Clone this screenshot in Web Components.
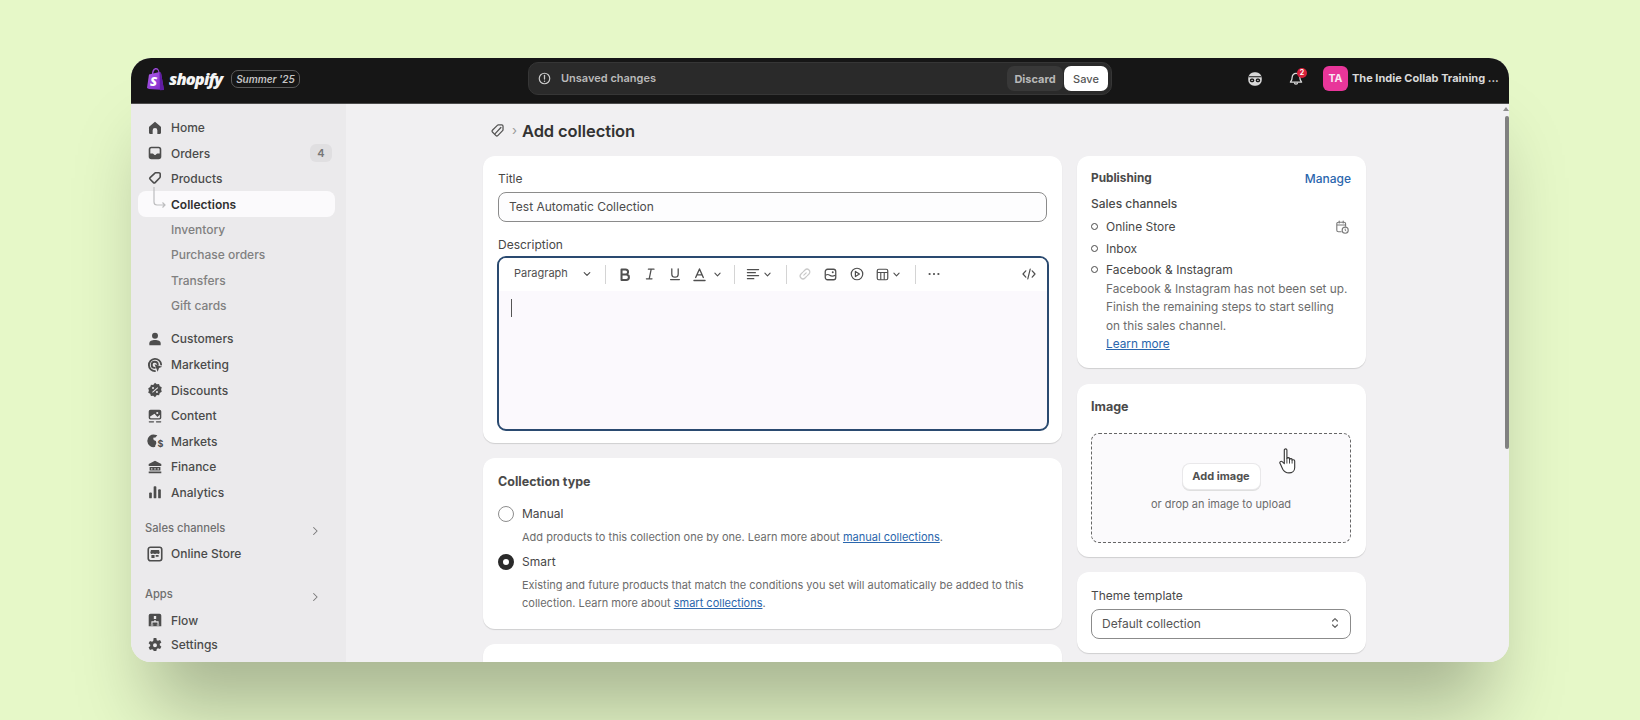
<!DOCTYPE html>
<html>
<head>
<meta charset="utf-8">
<title>Add collection</title>
<style>
    html, body { margin: 0; height: 100%; }
    body {
        background: #e6f8c8;
        font-family: Inter, "Noto Sans", sans-serif;
        overflow: hidden;
    }
    a { color: #2a66ad; text-decoration: underline; }
    .sec { margin-top: 8px; }
    .g { height: 25.6px; }
</style>
</head>
<body>
<app-window>
    <top-bar slot="top"></top-bar>
    <side-nav slot="side">
        <nav-item icon="home">Home</nav-item>
        <nav-item icon="orders" badge="4">Orders</nav-item>
        <nav-item icon="tag">Products</nav-item>
        <nav-item active>Collections</nav-item>
        <nav-item sub>Inventory</nav-item>
        <nav-item sub>Purchase orders</nav-item>
        <nav-item sub>Transfers</nav-item>
        <nav-item sub>Gift cards</nav-item>
        <nav-item class="sec g" icon="person">Customers</nav-item>
        <nav-item class="g" icon="target">Marketing</nav-item>
        <nav-item class="g" icon="discount">Discounts</nav-item>
        <nav-item class="g" icon="content">Content</nav-item>
        <nav-item class="g" icon="globe">Markets</nav-item>
        <nav-item class="g" icon="bank">Finance</nav-item>
        <nav-item class="g" icon="chart">Analytics</nav-item>
        <nav-heading style="margin-top:10px">Sales channels</nav-heading>
        <nav-item icon="store" style="margin-top:1px">Online Store</nav-item>
        <nav-heading style="margin-top:15px">Apps</nav-heading>
        <nav-item icon="flow" style="margin-top:1px">Flow</nav-item>
        <nav-item icon="gear" style="margin-top:-1px">Settings</nav-item>
    </side-nav>
    <collection-page slot="main">
        <form-card slot="left" style="padding-bottom:12px">
            <text-field label="Title" value="Test Automatic Collection"></text-field>
            <rich-editor label="Description"></rich-editor>
        </form-card>
        <form-card slot="left" style="padding:15px 15px 17px">
            <card-title>Collection type</card-title>
            <radio-option label="Manual" style="margin-top:15px">Add products to this collection one by one. Learn more about <a href="#">manual collections</a>.</radio-option>
            <radio-option label="Smart" checked style="margin-top:7px">Existing and future products that match the conditions you set will automatically be added to this<br>collection. Learn more about <a href="#">smart collections</a>.</radio-option>
        </form-card>
        <form-card slot="left" style="height:120px"></form-card>

        <form-card slot="right" style="padding:14px 15px 10px 14px">
            <publishing-panel>
                <channel-row label="Online Store" schedule></channel-row>
                <channel-row label="Inbox"></channel-row>
                <channel-row label="Facebook &amp; Instagram">Facebook &amp; Instagram has not been set up.<br>Finish the remaining steps to start selling<br>on this sales channel.<br><a href="#">Learn more</a></channel-row>
            </publishing-panel>
        </form-card>
        <form-card slot="right" style="padding-left:14px">
            <card-title>Image</card-title>
            <image-drop></image-drop>
        </form-card>
        <form-card slot="right" style="padding:15px 15px 14px 14px">
            <select-field label="Theme template" value="Default collection"></select-field>
        </form-card>
    </collection-page>
</app-window>

<script>
// Polaris-like icons, drawn on a 20 unit box.
const icons = {
    home: '<path fill="currentColor" d="M10 3 16.2 8.2c.3.3.5.6.5 1V15a1.8 1.8 0 0 1-1.8 1.8H12.6V12.6a2.6 2.6 0 0 0-5.2 0v4.2H5.100A1.800 1.800 0 0 1 3.300 15V9.200c0-.4.2-.7.5-1z"/>',
    orders: '<path fill="currentColor" fill-rule="evenodd" d="M6 3h8a3 3 0 0 1 3 3v8a3 3 0 0 1-3 3H6a3 3 0 0 1-3-3V6a3 3 0 0 1 3-3zm0 1.800A1.200 1.200 0 0 0 4.800 6v4.500h2.600c.5 0 .8.3 1 .7.3.7.9 1 1.600 1s1.300-.3 1.600-1c.2-.4.5-.7 1-.7h2.600V6A1.200 1.200 0 0 0 14 4.800z"/>',
    tag: '<path transform="translate(1.500 1.500) scale(.85)" fill="none" stroke="currentColor" stroke-width="2.100" stroke-linejoin="round" d="M11.500 3.200h3.700a1.600 1.600 0 0 1 1.600 1.600v3.700c0 .5-.2.9-.5 1.200l-6.200 6.300a1.500 1.500 0 0 1-2.100 0l-4.400-4.400a1.500 1.500 0 0 1 0-2.100l6.300-5.800c.2-.3.4-.5.6-.5z"/>',
    crumb: '<path fill="none" stroke="currentColor" stroke-width="1.500" stroke-linejoin="round" d="M11 3.500h4a1.500 1.500 0 0 1 1.500 1.500v4c0 .5-.2.9-.5 1.200l-5.700 5.800a1.500 1.500 0 0 1-2.100 0l-4.200-4.200a1.500 1.500 0 0 1 0-2.100l5.800-5.700c.3-.3.7-.5 1.200-.5z"/><path fill="none" stroke="currentColor" stroke-width="1.500" stroke-linecap="round" d="M7 14 14 6.500"/>',
    person: '<circle cx="10" cy="6.300" r="3.300" fill="currentColor"/><path fill="currentColor" d="M3.700 14.600C3.700 12.300 6.500 11 10 11s6.300 1.300 6.300 3.600V17H3.700z"/>',
    target: '<path fill="none" stroke="currentColor" stroke-width="2.100" stroke-linecap="round" d="M10 16.800A6.800 6.800 0 1 1 16.800 9.500M9.800 13.200a3.400 3.400 0 1 1 3.300-3.600"/><path fill="currentColor" d="M9.500 9.300 18 12l-3.500 1.300L13 17.500z"/>',
    discount: '<path fill="currentColor" fill-rule="evenodd" d="M10 2l2 1.500 2.500-.2.8 2.400 2.200 1.300-.7 2.500.7 2.500-2.200 1.300-.8 2.400-2.500-.2L10 18l-2-1.500-2.500.2-.8-2.400-2.200-1.300.7-2.500-.7-2.500 2.200-1.300.8-2.400 2.500.2zM7.800 6.800a1.100 1.100 0 1 0 0 2.200 1.100 1.100 0 0 0 0-2.200zm4.400 4.200a1.100 1.100 0 1 0 0 2.200 1.100 1.100 0 0 0 0-2.200zm.6-4-6 5.200.7.800 6-5.200z"/>',
    content: '<path fill="currentColor" fill-rule="evenodd" d="M5 3h10a2 2 0 0 1 2 2v7a2 2 0 0 1-2 2H5a2 2 0 0 1-2-2V5a2 2 0 0 1 2-2zm-.4 7.500v1.200c0 .4.3.7.7.7h9.400c.4 0 .7-.3.7-.7V8.500L12.700 11 9.500 7.500zM12.500 5.500a1.200 1.200 0 1 0 0 2.400 1.200 1.200 0 0 0 0-2.400z"/><rect x="3" y="15.700" width="6" height="1.500" rx=".7" fill="currentColor"/><rect x="11" y="15.700" width="6" height="1.500" rx=".7" fill="currentColor"/>',
    globe: '<path fill="currentColor" d="M10 3a7 7 0 0 1 2.600.5L10.500 6 8 6.500l.5 2.500 2.500 1 .5 2.500-1.500 3.300.5.700A7 7 0 1 1 10 3z"/><text x="16" y="16.500" font-size="10" font-weight="700" text-anchor="middle" fill="currentColor" font-family="Inter, sans-serif">$</text>',
    bank: '<path fill="currentColor" d="M10 3l7 3.700V9H3V6.700zM3 15h14v2H3zM4 10h12v4H4z"/><path fill="#ebeaec" d="M6 11h1v2H6zM9.500 11h1v2h-1zM13 11h1v2h-1z"/>',
    chart: '<rect x="3.500" y="10.500" width="3" height="6.500" rx="1" fill="currentColor"/><rect x="8.500" y="3.500" width="3" height="13.500" rx="1" fill="currentColor"/><rect x="13.500" y="7" width="3" height="10" rx="1" fill="currentColor"/>',
    store: '<rect x="2.500" y="2.500" width="15" height="15" rx="2.500" fill="none" stroke="currentColor" stroke-width="1.800"/><path fill="currentColor" d="M5.500 5.500h9l.7 3a1.700 1.700 0 0 1-3 .8 2 2 0 0 1-2.200.5 2 2 0 0 1-2.200-.5 1.700 1.700 0 0 1-3-.8zM6 11h3.500v3.500H6zM10.800 11h3.200v2h-3.200z"/>',
    flow: '<path fill="currentColor" fill-rule="evenodd" d="M5 3h10a2 2 0 0 1 2 2v12H3V5a2 2 0 0 1 2-2zm3.700 2.500v3.500h2.600V5.500zM9.300 10v1.500H6v3h1.200v-1.800h5.600v1.800H14v-3h-3.300V10zM5.300 15v1h2.800v-1zm6.600 0v1h2.800v-1z"/>',
    gear: '<path fill="currentColor" fill-rule="evenodd" d="M8.500 2h3l.5 2.300 1.300.7 2.300-.8 1.500 2.600-1.800 1.600v1.500l1.800 1.700-1.500 2.600-2.300-.8-1.300.7-.5 2.400h-3L8 15.100l-1.300-.7-2.300.8-1.500-2.600 1.800-1.700V9.400L2.900 7.800l1.500-2.600 2.300.8L8 5.300zM10 7.800a2.200 2.200 0 1 0 0 4.400 2.200 2.200 0 0 0 0-4.400z" transform="translate(0 .3)"/>',
    chevD: '<path fill="none" stroke="currentColor" stroke-width="1.700" stroke-linecap="round" stroke-linejoin="round" d="M6 8l4 4 4-4"/>',
    bold: '<path fill="none" stroke="currentColor" stroke-width="2.400" stroke-linejoin="round" d="M6.500 4h4.700a3 3 0 0 1 0 6H6.500zm0 6h5.500a3.200 3.200 0 0 1 0 6.400H6.500z"/>',
    italic: '<path fill="none" stroke="currentColor" stroke-width="1.600" stroke-linecap="round" d="M8 4h7M5.500 16h7M11.500 4l-2.500 12"/>',
    underline: '<path fill="none" stroke="currentColor" stroke-width="1.600" stroke-linecap="round" d="M6 3.500v6.500a4 4 0 0 0 8 0V3.500M4.500 17h11"/>',
    colorA: '<path fill="none" stroke="currentColor" stroke-width="1.600" stroke-linecap="round" stroke-linejoin="round" d="M5.500 13.500 10 3.500l4.500 10M7 10.500h6M3.500 17h13"/>',
    align: '<path fill="none" stroke="currentColor" stroke-width="1.500" stroke-linecap="round" d="M3 4.500h14M3 8.300h10M3 12h14M3 15.800h8"/>',
    link: '<path fill="none" stroke="currentColor" stroke-width="1.500" stroke-linecap="round" d="M8.500 11.500l3-3M8 7l2-2a3.500 3.500 0 0 1 5 5l-2 2M12 13l-2 2a3.500 3.500 0 0 1-5-5l2-2"/>',
    image: '<rect x="3" y="3" width="14" height="14" rx="3" fill="none" stroke="currentColor" stroke-width="1.700"/><circle cx="13" cy="7" r="1.300" fill="currentColor"/><path fill="none" stroke="currentColor" stroke-width="1.500" d="M3.500 11c2-1.500 3.500-1.500 5.500 0s3.500 2 7.500 0"/>',
    play: '<circle cx="10" cy="10" r="7.200" fill="none" stroke="currentColor" stroke-width="1.500"/><path fill="none" stroke="currentColor" stroke-width="1.500" stroke-linejoin="round" d="M8 6.800v6.400l5-3.200z"/>',
    table: '<rect x="3" y="3" width="14" height="14" rx="2" fill="none" stroke="currentColor" stroke-width="1.600"/><path fill="none" stroke="currentColor" stroke-width="1.500" d="M3 7.300h14M7.700 7.300V17M12.300 7.300V17"/>',
    more: '<circle cx="4.500" cy="10" r="1.400" fill="currentColor"/><circle cx="10" cy="10" r="1.400" fill="currentColor"/><circle cx="15.500" cy="10" r="1.400" fill="currentColor"/>',
    code: '<path fill="none" stroke="currentColor" stroke-width="1.500" stroke-linecap="round" stroke-linejoin="round" d="M6 6 2.500 10 6 14M14 6l3.500 4-3.500 4M11.500 4l-3 12"/>',
    alert: '<circle cx="10" cy="10" r="7" fill="none" stroke="currentColor" stroke-width="1.600"/><path stroke="currentColor" stroke-width="1.700" stroke-linecap="round" d="M10 6v4.800"/><circle cx="10" cy="13.700" r="1" fill="currentColor"/>',
    bell: '<path fill="none" stroke="currentColor" stroke-width="1.600" stroke-linejoin="round" d="M10 3a4.800 4.800 0 0 0-4.800 4.800c0 3.500-1.700 5-2.200 6.200h14c-.5-1.200-2.200-2.700-2.200-6.200A4.800 4.800 0 0 0 10 3z"/><path fill="none" stroke="currentColor" stroke-width="1.600" d="M8 14.500a2 2 0 0 0 4 0"/>',
    sidekick: '<rect x="2.500" y="2.500" width="15" height="15" rx="6.500" fill="currentColor"/><path stroke="#161616" stroke-width="1.200" d="M3 7.500h14"/><rect x="4.300" y="9.500" width="4.900" height="4" rx="1.800" fill="#161616"/><rect x="10.800" y="9.500" width="4.900" height="4" rx="1.800" fill="#161616"/><rect x="5.800" y="10.700" width="1.900" height="1.500" rx=".7" fill="currentColor"/><rect x="12.300" y="10.700" width="1.900" height="1.500" rx=".7" fill="currentColor"/>',
    schedule: '<path fill="none" stroke="currentColor" stroke-width="1.400" stroke-linecap="round" d="M9 16H5.500A2 2 0 0 1 3.500 14V6a2 2 0 0 1 2-2h7a2 2 0 0 1 2 2v3M3.500 7.500h11M6.500 2.500v2.500M11.500 2.500v2.500"/><circle cx="14" cy="14" r="3.800" fill="none" stroke="currentColor" stroke-width="1.400"/><path fill="none" stroke="currentColor" stroke-width="1.200" d="M14 12v2.200l1.300.8"/>',
    stepper: '<path fill="none" stroke="currentColor" stroke-width="1.600" stroke-linecap="round" stroke-linejoin="round" d="M7 7.500l3-3 3 3M7 12.500l3 3 3-3"/>',
    chevR: '<path fill="none" stroke="currentColor" stroke-width="1.500" stroke-linecap="round" stroke-linejoin="round" d="M8 5l5 5-5 5"/>'
};

function svg(name, size) {
    return `<svg width="${size}" height="${size}" viewBox="0 0 20 20" style="display:block;flex:none">${icons[name]}</svg>`;
}

// Small helper so every element below just hands over its html.
class ShadowElement extends HTMLElement {
    constructor() {
        super();
        this.shadow = this.attachShadow({ mode: 'open' });
    }
    connectedCallback() {
        this.shadow.innerHTML = this.render();
    }
}

class AppWindow extends ShadowElement {
    render() {
        return `<style>
            :host { display: block; box-sizing: border-box; padding: 58px 131px 0; height: 100vh; }
            .frame {
                width: 1378px; height: 604px; border-radius: 20px; overflow: hidden;
                display: flex; flex-direction: column; background: #f1f0f2;
                box-shadow: 0 65px 70px -20px rgba(0,0,0,.27);
            }
            .body { flex: 1; display: flex; min-height: 0; position: relative; }
            .bar { position: absolute; right: 0; top: 12px; width: 4px; height: 333px; background: #808080; border-radius: 2px; }
            .arrow { position: absolute; right: 0; top: 3px; width: 0; height: 0; border: 3px solid transparent; border-top: 0; border-bottom: 4px solid #8d8d8d; }
        </style>
        <div class="frame">
            <slot name="top"></slot>
            <div class="body">
                <slot name="side"></slot>
                <slot name="main"></slot>
                <div class="arrow"></div>
                <div class="bar"></div>
            </div>
        </div>`;
    }
}

class TopBar extends ShadowElement {
    render() {
        return `<style>
            :host {
                display: flex; align-items: center; height: 46px; flex: none; box-sizing: border-box;
                background: #161616; border-bottom: 1px solid #4c4c4c; color: #ddd;
                font: 700 12px Inter, sans-serif; padding: 0 0 4px 15px;
            }
            .logo { display: flex; align-items: center; width: 85px; gap: 3px; }
            .word { font: italic 800 16.500px "Open Sans", sans-serif; color: #f4f4f4; letter-spacing: -.9px; }
            .pill {
                width: 69px; height: 18px; box-sizing: border-box; border: 1px solid #5a5a5a; border-radius: 7px;
                display: flex; align-items: center; justify-content: center;
                font: italic 600 10px Inter, sans-serif; color: #c4c4c4;
            }
            .save {
                display: flex; align-items: center; width: 584px; height: 33px; box-sizing: border-box; margin-left: 228px;
                background: #2a2a2a; border: 1px solid #363636; border-radius: 10px; padding: 0 3px 0 8px; color: #b9b9b9;
                font-size: 11px; font-weight: 600;
            }
            .save svg { margin-right: 9px; color: #c8c8c8; }
            .msg { flex: 1; margin-top: -1px; }
            .discard, .ok {
                height: 25px; display: flex; align-items: center; justify-content: center; border-radius: 7px;
            }
            .discard { width: 56px; background: #383838; color: #b8b8b8; margin-right: 1px; font-weight: 700; }
            .ok { width: 44px; background: #fff; color: #555; font-weight: 500; }
            .icon { position: relative; color: #d8d8d8; }
            .dot {
                position: absolute; right: -3px; top: -3px; width: 10px; height: 10px; border-radius: 50%;
                background: #d8213b; color: #fff; font: 700 7px/10px Inter, sans-serif; text-align: center;
            }
            .avatar {
                width: 25px; height: 25px; border-radius: 6px; background: #e8369a; color: #f8e8f2;
                display: flex; align-items: center; justify-content: center; font-size: 10.500px; margin-left: 19px;
            }
            .name { margin-left: 4px; color: #d9d9d9; font-size: 11px; font-weight: 700; margin-top: -1px; white-space: nowrap; }
        </style>
        <div class="logo">
            <svg width="20" height="24" viewBox="0 0 20 24">
                <defs><linearGradient id="bag" x1="0" y1="0" x2="1" y2="1"><stop offset="0" stop-color="#b060ea"/><stop offset="1" stop-color="#7a22c4"/></linearGradient></defs>
                <path fill="#9a48d8" d="M6 7C6 3 8 1 10 1s3.500 2 3.500 5l-1 .3C12.500 4 11.500 2.500 10 2.500S7.500 4 7.300 7z"/>
                <path fill="url(#bag)" d="M3 7.500 13.500 5l1.500 1 3 17-15-1-2-1z"/>
                <path fill="#5f1ca3" d="M13.500 5l1.500 1 3 17-4 .2z"/>
                <text x="7.500" y="18.500" font-family="Open Sans, sans-serif" font-size="13" font-weight="800" font-style="italic" fill="#fff" text-anchor="middle">S</text>
            </svg>
            <span class="word">shopify</span>
        </div>
        <div class="pill">Summer '25</div>
        <div class="save">
            ${svg('alert', 15)}
            <span class="msg">Unsaved changes</span>
            <span class="discard">Discard</span>
            <span class="ok">Save</span>
        </div>
        <div class="icon" style="margin-left:134px">${svg('sidekick', 18)}</div>
        <div class="icon" style="margin-left:24px">${svg('bell', 16)}<span class="dot">2</span></div>
        <div class="avatar">TA</div>
        <div class="name">The Indie Collab Training ...</div>`;
    }
}

class SideNav extends ShadowElement {
    render() {
        return `<style>
            :host {
                display: flex; flex-direction: column; width: 215px; flex: none; box-sizing: border-box;
                background: #ebeaec; padding: 11px 11px 0 7px; font: 500 12px Inter, sans-serif; color: #4a4a4a;
            }
        </style><slot></slot>`;
    }
}

class NavItem extends ShadowElement {
    render() {
        const badge = this.getAttribute('badge');
        const icon = this.getAttribute('icon');
        const active = this.hasAttribute('active');
        return `<style>
            :host { display: block; height: 25.400px; flex: none; }
            .row {
                display: flex; align-items: center; height: 100%; box-sizing: border-box; padding-left: 8px;
                border-radius: 8px; position: relative;
                ${active ? 'background:#fbfafc;color:#303030;font-weight:600;height:26px;' : ''}
                ${this.hasAttribute('sub') ? 'color:#808080;' : ''}
            }
            .ic { width: 18px; height: 18px; margin-right: 7px; color: #4d4d4d; flex: none; }
            .badge {
                margin-left: auto; margin-right: 3px; width: 22px; height: 18px; border-radius: 6px; background: #e0dfe1;
                color: #777; font-size: 11px; display: flex; align-items: center; justify-content: center; font-weight: 600;
            }
            .elbow { position: absolute; left: 15px; top: -4px; }
        </style>
        <div class="row">
            <span class="ic">${icon ? svg(icon, 18) : ''}</span>
            <slot></slot>
            ${badge ? `<span class="badge">${badge}</span>` : ''}
            ${active ? '<svg class="elbow" width="14" height="24" viewBox="0 0 14 24"><path fill="none" stroke="#bdbdbf" stroke-width="1.200" d="M1 0v15c0 2 1 3 3 3h8M9.500 15.500 12 18l-2.500 2.500"/></svg>' : ''}
        </div>`;
    }
}

class NavHeading extends ShadowElement {
    render() {
        return `<style>
            :host {
                display: flex; align-items: center; justify-content: space-between; height: 25px; flex: none;
                font-size: 11.200px; color: #6f6f6f; padding: 0 13px 0 7px;
            }
            span { color: #777; margin-top: 6px; }
        </style><slot></slot><span>${svg('chevR', 14)}</span>`;
    }
}

class CollectionPage extends ShadowElement {
    render() {
        return `<style>
            :host { display: block; flex: 1; min-width: 0; box-sizing: border-box; padding: 0 0 0 137px; background: #f1f0f2; overflow: hidden; font: 400 12px Inter, sans-serif; color: #474747; }
            .head { display: flex; align-items: center; height: 52px; padding-left: 6px; color: #303030; }
            .head svg { color: #555; }
            .sep { margin: 0 5px 0 6px; color: #999; font-size: 13px; }
            h1 { margin: 2px 0 0; font: 600 16.500px Inter, sans-serif; color: #333; letter-spacing: -.1px; }
            .cols { display: flex; gap: 15px; align-items: flex-start; }
            .col { display: flex; flex-direction: column; gap: 15px; flex: none; }
            .l { width: 579px; } .r { width: 289px; gap: 15.500px; }
        </style>
        <div class="head">${svg('crumb', 17)}<span class="sep">›</span><h1>Add collection</h1></div>
        <div class="cols">
            <div class="col l"><slot name="left"></slot></div>
            <div class="col r"><slot name="right"></slot></div>
        </div>`;
    }
}

class FormCard extends ShadowElement {
    render() {
        return `<style>
            :host {
                display: block; box-sizing: border-box; background: #fff; border-radius: 12px; padding: 14px 15px 14px;
                box-shadow: 0 1px 1px rgba(0,0,0,.14);
            }
        </style><slot></slot>`;
    }
}

class CardTitle extends ShadowElement {
    render() {
        return `<style>
            :host { display: block; font-weight: 650; font-size: 12.500px; line-height: 17px; color: #4a4a4a; }
        </style><slot></slot>`;
    }
}

class TextField extends ShadowElement {
    render() {
        return `<style>
            :host { display: block; }
            label { display: block; line-height: 18px; font-size: 12px; }
            .input {
                margin-top: 4px; height: 29.500px; box-sizing: border-box; border: 1px solid #8b8b8b; border-radius: 8px;
                padding: 0 10px 1px; display: flex; align-items: center; color: #4c4c4c; background: #fdfdfe;
            }
        </style>
        <label>${this.getAttribute('label')}</label>
        <div class="input">${this.getAttribute('value')}</div>`;
    }
}

class RichEditor extends ShadowElement {
    render() {
        const w = (n, ml, name, size = 17) =>
            `<span class="b" style="width:${n}px;margin-left:${ml}px">${svg(name, size)}</span>`;
        const div = ml => `<i style="margin-left:${ml}px"></i>`;
        return `<style>
            :host { display: block; margin-top: 14px; }
            label { display: block; line-height: 18px; font-size: 12px; }
            .box {
                margin: 2px -2px 0 -1px; height: 175px; box-sizing: border-box; border: 2px solid #2a4a70; border-radius: 9px;
                background: #fbf9fd; overflow: hidden; display: flex; flex-direction: column;
            }
            .tools { display: flex; align-items: center; height: 33px; background: #fff; padding: 0 6px 0 15px; color: #4f4f4f; flex: none; }
            .para { width: 67px; font-size: 11px; margin-top: -3px; }
            .b { display: flex; justify-content: center; align-items: center; flex: none; }
            i { display: block; width: 1px; height: 19px; background: #d4d4d4; flex: none; }
            .light { color: #c9c9c9; } .code { margin-left: auto; }
            .caret { width: 1px; height: 18px; background: #555; margin: 8px 0 0 12px; }
        </style>
        <label>${this.getAttribute('label')}</label>
        <div class="box">
            <div class="tools">
                <span class="para">Paragraph</span>${w(12, 0, 'chevD', 14)}${div(11.500)}
                ${w(26, 6, 'bold')}${w(25, 0, 'italic', 16)}${w(25, 0, 'underline', 16)}${w(24, 0, 'colorA', 17)}${w(12, 0, 'chevD', 13)}${div(10)}
                ${w(18, 9, 'align', 16)}${w(12, 0, 'chevD', 13)}${div(12)}
                <span class="light" style="display:flex">${w(24, 6, 'link', 16)}</span>${w(27, 0, 'image', 15)}${w(27, 0, 'play', 16)}${w(18, 3, 'table', 15)}${w(12, -1, 'chevD', 13)}${div(12)}
                ${w(36, 0, 'more', 16)}
                <span class="code">${w(24, 0, 'code', 16)}</span>
            </div>
            <div class="caret"></div>
        </div>`;
    }
}

class RadioOption extends ShadowElement {
    render() {
        const on = this.hasAttribute('checked');
        return `<style>
            :host { display: block; }
            .top { display: flex; align-items: center; height: 18px; font-size: 12px; }
            .dot {
                width: 16px; height: 16px; box-sizing: border-box; border-radius: 50%; margin-right: 8px;
                ${on ? 'border: 5px solid #2a2a2a; background:#fff;' : 'border: 1px solid #8d8d8d;'}
            }
            .desc { margin: 5px 0 0 24px; color: #6c6c6c; font-size: 11px; line-height: 18px; }
        </style>
        <div class="top"><span class="dot"></span>${this.getAttribute('label')}</div>
        <div class="desc"><slot></slot></div>`;
    }
}

class PublishingPanel extends ShadowElement {
    render() {
        return `<style>
            :host { display: block; }
            .head { display: flex; justify-content: space-between; line-height: 17px; font-size: 12px; }
            b { font-weight: 650; color: #4a4a4a; font-size: 11.800px; }
            .manage { color: #2a66ad; font-weight: 500; }
            .sub { margin: 8px 0 6px; line-height: 17px; font-size: 12px; font-weight: 500; color: #4a4a4a; }
        </style>
        <div class="head"><b>Publishing</b><span class="manage">Manage</span></div>
        <div class="sub">Sales channels</div>
        <slot></slot>`;
    }
}

class ChannelRow extends ShadowElement {
    render() {
        return `<style>
            :host { display: block; margin-bottom: 4.500px; }
            .top { display: flex; align-items: center; height: 17px; font-size: 12px; }
            .dot { width: 7px; height: 7px; box-sizing: border-box; border: 1px solid #4a4a4a; border-radius: 50%; margin-right: 8px; }
            .sch { margin-left: auto; margin-right: 1px; color: #7a7a7a; }
            .desc { margin-left: 15px; color: #6c6c6c; font-size: 11.800px; line-height: 18.400px; margin-top: 2px; }
            :host(:not([has-desc])) .desc { display: none; }
        </style>
        <div class="top"><span class="dot"></span>${this.getAttribute('label')}${this.hasAttribute('schedule') ? `<span class="sch">${svg('schedule', 16)}</span>` : ''}</div>
        <div class="desc" style="${this.childNodes.length ? 'display:block' : ''}"><slot></slot></div>`;
    }
}

class ImageDrop extends ShadowElement {
    render() {
        return `<style>
            :host { display: flex; flex-direction: column; align-items: center; position: relative; box-sizing: border-box; height: 110px; margin-top: 18px; background: #fbfafc; border: 1px dashed #666; border-radius: 8px; padding-top: 30px; }
            .btn {
                height: 25px; width: 77px; box-sizing: border-box; border-radius: 7px; background: #fff; display: flex; align-items: center; justify-content: center;
                font-weight: 650; font-size: 11px; color: #505050; box-shadow: 0 0 0 1px #e9e8ea, 0 1px 0 1px #dfdfdf;
            }
            p { margin: 7px 0 0; font-size: 11px; color: #6c6c6c; line-height: 16px; }
            svg { position: absolute; left: 187px; top: 14px; }
        </style>
        <div class="btn">Add image</div>
        <p>or drop an image to upload</p>
        <svg width="21" height="27" viewBox="0 0 20 26">
            <path fill="#fff" stroke="#3a3a3a" stroke-width="1.100" stroke-linejoin="round" d="M5 2c0-1.500 2.500-1.500 2.500 0v8c0-1 2.500-1 2.500 0v1c0-1 2.500-1 2.500 0v1c.2-1 2.500-1 2.500.5V19c0 3-2.500 5-5.500 5-3 0-4.500-1-6-3.500L1 15c-1-1.500.8-3 2.200-1.700L5 15z"/>
            <path fill="none" stroke="#3a3a3a" stroke-width=".9" d="M7.500 10v5M10 11v4M12.500 12v3"/>
        </svg>`;
    }
}

class SelectField extends ShadowElement {
    render() {
        return `<style>
            :host { display: block; }
            label { display: block; line-height: 18px; font-size: 12px; color: #4a4a4a; }
            .sel {
                margin-top: 4px; height: 30px; box-sizing: border-box; border: 1px solid #8b8b8b; border-radius: 8px;
                display: flex; align-items: center; justify-content: space-between; padding: 0 7px 2px 10px; color: #555;
            }
            .sel svg { color: #666; }
        </style>
        <label>${this.getAttribute('label')}</label>
        <div class="sel">${this.getAttribute('value')}${svg('stepper', 16)}</div>`;
    }
}

customElements.define('app-window', AppWindow);
customElements.define('top-bar', TopBar);
customElements.define('side-nav', SideNav);
customElements.define('nav-item', NavItem);
customElements.define('nav-heading', NavHeading);
customElements.define('collection-page', CollectionPage);
customElements.define('form-card', FormCard);
customElements.define('card-title', CardTitle);
customElements.define('text-field', TextField);
customElements.define('rich-editor', RichEditor);
customElements.define('radio-option', RadioOption);
customElements.define('publishing-panel', PublishingPanel);
customElements.define('channel-row', ChannelRow);
customElements.define('image-drop', ImageDrop);
customElements.define('select-field', SelectField);
</script>
</body>
</html>
